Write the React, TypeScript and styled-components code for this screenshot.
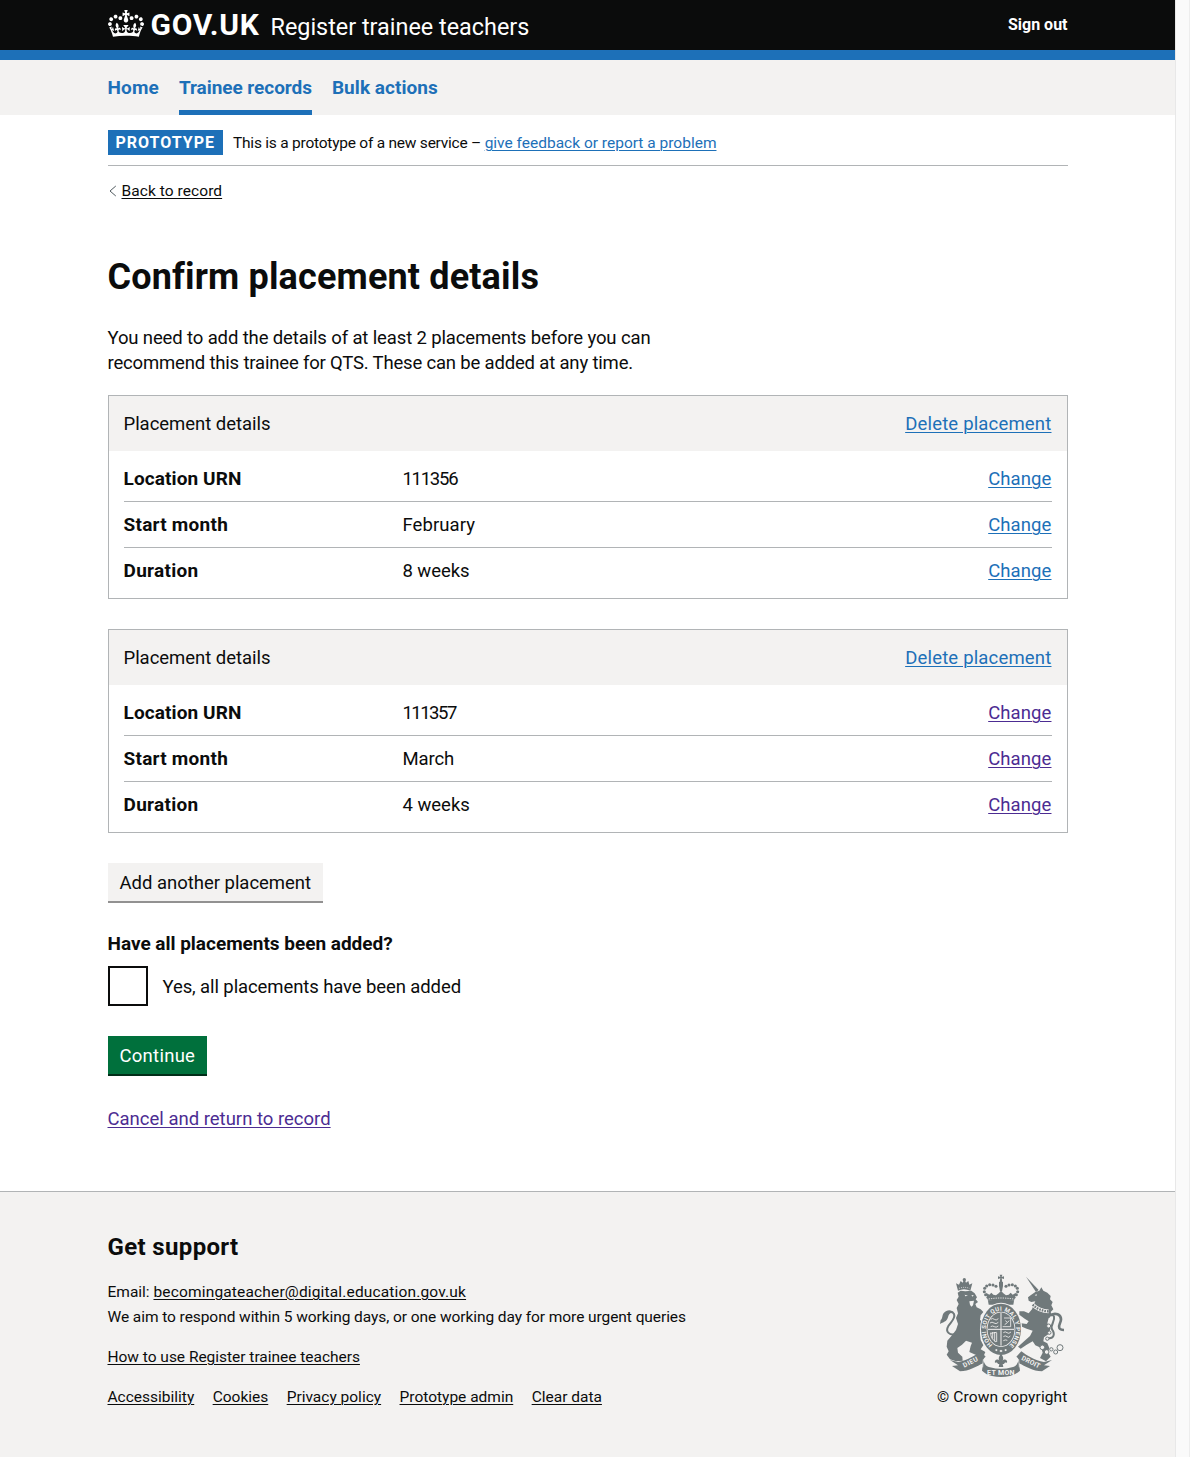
import React from "react";
import styled, { createGlobalStyle, css } from "styled-components";

const ink = "#0b0c0c";
const blue = "#1d70b8";
const visited = "#4c2c92";
const grey = "#f3f2f1";
const line = "#b1b4b6";
const crest = "#70797b";

const GlobalStyle = createGlobalStyle`
  * { box-sizing: border-box; }
  body { margin: 0; background: #fff; color: ${ink}; font: 400 18.5px/25px Roboto, Arial, sans-serif; }
  h1, h2, p, dl, dt, dd, ul { margin: 0; padding: 0; }
  ul { list-style: none; }
`;

type Tracked = { $track?: number };
const track = css<Tracked>`
  letter-spacing: ${(p) => p.$track ?? 0}px;
`;

const Shell = styled.div`
  display: grid;
  grid-template-columns: 1fr 15px;
  height: 1457px;
  overflow: hidden;
`;
const Page = styled.div`
  display: flex;
  flex-direction: column;
  min-width: 0;
`;
const ScrollTrack = styled.div`
  background: #fafafa;
  border-left: 1px solid #e8e8e8;
  border-right: 1px solid #ededed;
`;
const Container = styled.div`
  width: 960px;
  margin: 0 auto;
`;

const Header = styled.header`
  height: 60px;
  background: ${ink};
  border-bottom: 10px solid ${blue};
  color: #fff;
`;
const HeaderRow = styled(Container)`
  display: flex;
  align-items: baseline;
  height: 50px;
`;
const Crown = styled.svg`
  width: 36px;
  height: 27px;
  margin-right: 7px;
  align-self: flex-start;
  margin-top: 10px;
`;
const Logotype = styled.span<Tracked>`
  font-size: 30px;
  line-height: 49px;
  font-weight: 700;
  ${track}
`;
const ServiceName = styled.span<Tracked>`
  margin-left: 11px;
  font-size: 23.4px;
  line-height: 30px;
  ${track}
`;
const SignOut = styled.a<Tracked>`
  align-self: center;
  margin-left: auto;
  font-size: 16px;
  line-height: 20px;
  font-weight: 700;
  ${track}
`;

const Nav = styled.nav`
  height: 55px;
  background: ${grey};
`;
const NavList = styled(Container)`
  display: flex;
  gap: 20px;
`;
const NavItem = styled.a<Tracked & { $current?: boolean }>`
  height: 55px;
  padding-top: 15px;
  color: ${blue};
  font-size: 19px;
  font-weight: 700;
  border-bottom: 5px solid ${(p) => (p.$current ? blue : "transparent")};
  ${track}
`;

const PhaseBanner = styled(Container)`
  display: flex;
  align-items: center;
  height: 51px;
  padding: 15px 0 10px;
  border-bottom: 1px solid ${line};
  font-size: 15.5px;
`;
const PhaseText = styled.p`
  padding-top: 2px;
`;
const Tag = styled.strong<Tracked>`
  height: 25px;
  padding: 0 8px;
  margin-right: 10px;
  background: ${blue};
  color: #fff;
  font-size: 16px;
  font-weight: 700;
  line-height: 25px;
  ${track}
`;
const Span = styled.span<Tracked>`
  ${track}
`;
const Link = styled.a<Tracked & { $tone?: "visited" | "ink" }>`
  color: ${(p) => (p.$tone === "visited" ? visited : p.$tone === "ink" ? ink : blue)};
  text-decoration: underline;
  text-decoration-thickness: 1px;
  text-underline-offset: 2px;
  ${track}
`;
const BackRow = styled.div`
  display: flex;
  align-items: center;
  gap: 5px;
  margin-top: 15px;
  height: 20px;
  font-size: 15.5px;
  line-height: 20px;
`;
const Chevron = styled.svg`
  width: 9px;
  height: 12px;
`;
const Heading = styled.h1<Tracked>`
  margin-top: 56px;
  font-size: 36px;
  line-height: 40px;
  font-weight: 700;
  ${track}
`;
const Lead = styled.p`
  margin: 29px 0 19px;
`;
const Row = styled.span<Tracked>`
  display: block;
  ${track}
`;

const Card = styled.section`
  border: 1px solid ${line};
  & + & {
    margin-top: 30px;
  }
`;
const CardHead = styled.div`
  display: flex;
  justify-content: space-between;
  padding: 16px 15px 14px;
  background: ${grey};
`;
const SummaryList = styled.dl`
  padding: 5px 15px;
`;
const SummaryRow = styled.div`
  display: grid;
  grid-template-columns: 30% 1fr auto;
  padding: 11px 0 9px;
  & + & {
    border-top: 1px solid ${line};
  }
`;
const Key = styled.dt<Tracked>`
  font-size: 19px;
  line-height: 23px;
  font-weight: 700;
  ${track}
`;
const Value = styled.dd<Tracked>`
  padding-left: 0.5px;
  ${track}
`;

const Button = styled.button<Tracked & { $secondary?: boolean }>`
  display: block;
  height: 38px;
  padding: 2px 12px 0;
  border: 0;
  font: inherit;
  color: ${(p) => (p.$secondary ? ink : "#fff")};
  background: ${(p) => (p.$secondary ? grey : "#00703c")};
  box-shadow: 0 2px 0 ${(p) => (p.$secondary ? "#929191" : "#002d18")};
  margin-top: 30px;
  ${track}
`;
const Legend = styled.p<Tracked>`
  margin-top: 30px;
  font-size: 19px;
  font-weight: 700;
  ${track}
`;
const CheckRow = styled.label`
  display: flex;
  align-items: center;
  gap: 15px;
  margin-top: 10px;
`;
const CheckLabel = styled.span<Tracked>`
  padding-top: 2px;
  ${track}
`;
const CheckBox = styled.input`
  appearance: none;
  width: 40px;
  height: 40px;
  margin: 0;
  border: 2px solid ${ink};
  background: #fff;
`;
const CancelRow = styled.p`
  margin-top: 33px;
`;

const Footer = styled.footer`
  flex: 1;
  margin-top: 59px;
  background: ${grey};
  border-top: 1px solid ${line};
`;
const FooterRow = styled(Container)`
  display: flex;
  justify-content: space-between;
  padding-top: 40px;
  font-size: 15.5px;
`;
const FooterHeading = styled.h2<Tracked>`
  font-size: 24px;
  line-height: 30px;
  margin-bottom: 18px;
  ${track}
`;
const FooterLine = styled.p`
  margin-bottom: 15px;
`;
const FooterLinks = styled.ul`
  display: flex;
  gap: 18.4px;
`;
const Copyright = styled.div`
  display: flex;
  flex-direction: column;
  align-items: flex-end;
  padding-top: 42px;
`;
const Arms = styled.svg`
  width: 125px;
  height: 103px;
  margin: 0 2.5px 8px 0;
`;

const CrownIcon = () => (
  <Crown viewBox="0 0 132 97" preserveAspectRatio="none" fill="#fff" aria-hidden="true">
    <path
      fillRule="evenodd"
      d="M25 30.2c3.5 1.5 7.7-.2 9.1-3.7 1.5-3.6-.2-7.8-3.9-9.2-3.6-1.4-7.6.3-9.1 3.9-1.4 3.5.3 7.5 3.9 9zM9 39.5c3.6 1.5 7.8-.2 9.2-3.7 1.5-3.6-.2-7.8-3.9-9.1-3.6-1.5-7.6.2-9.1 3.8-1.4 3.5.3 7.5 3.8 9zM4.4 57.2c3.5 1.5 7.7-.2 9.1-3.8 1.5-3.6-.2-7.7-3.9-9.1-3.5-1.5-7.6.3-9.1 3.8-1.4 3.5.3 7.6 3.9 9.1zm38.3-21.4c3.5 1.5 7.7-.2 9.1-3.8 1.5-3.6-.2-7.7-3.9-9.1-3.6-1.5-7.6.3-9.1 3.8-1.3 3.6.4 7.7 3.9 9.1zm64.4-5.6c-3.6 1.5-7.8-.2-9.1-3.7-1.5-3.6.2-7.8 3.8-9.2 3.6-1.4 7.7.3 9.2 3.9 1.3 3.5-.4 7.5-3.9 9zm15.9 9.3c-3.6 1.5-7.7-.2-9.1-3.7-1.5-3.6.2-7.8 3.7-9.1 3.6-1.5 7.7.2 9.2 3.8 1.5 3.5-.3 7.5-3.8 9zm4.7 17.7c-3.6 1.5-7.8-.2-9.2-3.8-1.5-3.6.2-7.7 3.9-9.1 3.6-1.5 7.7.3 9.2 3.8 1.3 3.5-.4 7.6-3.9 9.1zM89.3 35.8c-3.6 1.5-7.8-.2-9.2-3.8-1.4-3.6.2-7.7 3.9-9.1 3.6-1.5 7.7.3 9.2 3.8 1.4 3.6-.3 7.7-3.9 9.1zM69.7 17.7l8.9 4.7V9.3l-8.9 2.8c-.2-.3-.5-.6-.9-.9L72.4 0H59.6l3.5 11.2c-.3.3-.6.5-.9.9l-8.8-2.8v13.1l8.8-4.7c.3.3.6.7.9.9l-5 15.4v.1c-.2.8-.4 1.6-.4 2.4 0 4.1 3.1 7.5 7 8.1h.2c.3 0 .7.1 1 .1.4 0 .7 0 1-.1h.2c4-.6 7.1-4.1 7.1-8.1 0-.8-.1-1.7-.4-2.4V34l-5.1-15.4c.4-.2.7-.6 1-.9zM66 92.8c16.9 0 32.8 1.1 47.1 3.2 4-16.9 8.9-26.7 14-33.5l-9.6-3.4c1 4.9 1.1 7.2 0 10.2-1.5-1.4-3-4.3-4.2-8.7L108.6 76c2.8-2 5-3.2 7.5-3.3-4.4 9.4-10 11.9-13.6 11.2-4.3-.8-6.3-4.6-5.6-7.9 1-4.7 5.7-5.9 8-.5 4.3-8.7-3-11.4-7.6-8.8 7.1-7.2 7.9-13.5 2.1-21.1-8 6.1-8.1 12.3-4.5 20.8-4.7-5.4-12.1-2.5-9.5 6.2 3.4-5.2 7.9-2 7.2 3.1-.6 4.3-6.4 7.8-13.5 7.2-10.3-.9-10.9-8-11.2-13.8 2.5-.5 7.1 1.8 11 7.3L80.2 60c-4.1 4.4-8 5.3-12.3 5.4 1.4-4.4 8-11.6 8-11.6H55.5s6.4 7.2 7.9 11.6c-4.2-.1-8-1-12.3-5.4l1.4 16.4c3.9-5.5 8.5-7.7 10.9-7.3-.3 5.8-.9 12.8-11.1 13.8-7.2.6-12.9-2.9-13.5-7.2-.7-5 3.8-8.3 7.1-3.1 2.7-8.7-4.6-11.6-9.4-6.2 3.7-8.5 3.6-14.7-4.6-20.8-5.8 7.6-5 13.9 2.2 21.1-4.7-2.6-11.9.1-7.7 8.8 2.3-5.5 7.1-4.2 8.1.5.7 3.3-1.3 7.1-5.7 7.9-3.5.7-9-1.8-13.5-11.2 2.5.1 4.7 1.3 7.5 3.3l-4.7-15.4c-1.2 4.4-2.7 7.2-4.3 8.7-1.1-3-.9-5.3 0-10.2l-9.5 3.4c5 6.9 9.9 16.7 14 33.5 14.8-2.1 30.8-3.2 47.7-3.2z"
    />
  </Crown>
);

const beads: [number, number][] = [
  [174, 98], [167, 90], [163, 81], [164, 71], [170, 64], [179, 60], [189, 61], [198, 65],
  [252, 98], [259, 90], [263, 81], [262, 71], [256, 64], [247, 60], [237, 61], [228, 65],
];
const links: [number, number, number][] = [
  [356, 184, 6], [358, 204, 5], [352, 222, 5], [337, 248, 7], [350, 262, 7],
  [364, 254, 5], [377, 262, 6], [390, 249, 9],
];

const CrestIcon = () => (
  <Arms viewBox="30 28 375 309" fill={crest} aria-hidden="true">
    <path id="motto" fill="none" d="M190 242.5A45 56 0 1 1 236 242.5" />
    {/* lion */}
    <path d="M83 84L92 78L106 80L124 78L134 86L141 98L137 104L144 112L136 118L140 128L152 134L160 142L152 152L150 166L160 172L170 186L164 200L154 192L150 204L152 226L160 242L152 254L166 262L160 276L140 272L118 262L122 244L126 234L108 228L96 240L82 250L84 264L97 276L98 288L78 290L60 284L50 270L56 260L50 246L52 228L66 212L78 196L84 178L78 160L84 146L80 130L86 118L80 106L86 96Z" />
    <path fill={grey} d="M104 90L114 93L106 95ZM124 92L131 91L128 96ZM118 110L132 108L129 122L124 126L120 120Z" />
    <path
      fill="none"
      stroke={crest}
      strokeWidth="6"
      d="M78 208C58 214 46 200 54 186C60 174 78 162 72 148C66 138 50 142 46 154"
    />
    <path d="M32 166C38 162 36 150 42 144C50 134 66 134 72 144C62 142 56 148 54 158C50 172 40 172 30 178Z" />
    <path d="M84 78L78 56L87 60L92 49L98 54L103 42L108 54L115 49L118 60L127 56L121 78C108 72 96 72 84 78Z" />
    <circle cx="103" cy="45" r="5" />
    <path fill="none" stroke={grey} strokeWidth="2" strokeDasharray="3 3" d="M87 71C98 67 108 67 118 71" />
    {/* unicorn */}
    <path d="M288 36L326 76L318 82Z" />
    <path d="M316 82L328 78L334 68L340 78L352 84L362 94L360 104L368 112L364 122L370 134L362 142L366 152L356 160L352 176L362 190L356 208L342 218L340 230L352 236L358 250L354 262L362 276L348 290L330 280L338 264L334 250L316 242L308 230L290 240L272 252L264 246L284 228L300 214L308 198L290 192L276 186L274 176L290 178L296 170L284 162L268 150L268 140L282 140L296 146L306 134L312 118L316 110L304 112L296 108L294 98L304 90Z" />
    <path fill={grey} d="M314 91L321 89L319 94Z" />
    <path
      fill="none"
      stroke={crest}
      strokeWidth="6"
      d="M352 220C372 224 376 208 366 194C360 180 376 170 372 156C368 146 354 150 356 160"
    />
    <path
      fill="none"
      stroke={crest}
      strokeWidth="8"
      d="M362 152C376 142 393 150 393 164C393 176 384 180 388 190C390 194 396 196 402 196"
    />
    <path fill="none" stroke={grey} strokeWidth="11" d="M308 120C320 132 338 140 356 140" />
    <path fill="none" stroke={crest} strokeWidth="7" strokeDasharray="5 3" d="M308 120C320 132 338 140 356 140" />
    <g fill="none" stroke={crest} strokeWidth="3">
      {links.map(([x, y, r]) => (
        <circle key={`${x}-${y}`} cx={x} cy={y} r={r} fill={grey} />
      ))}
    </g>
    {/* crown above the garter */}
    <path d="M209 30H217L215 37L222 35V43L215 41L217 52H209L211 41L204 43V35L211 37Z" />
    <path d="M207 52H219V64L216 80H210L207 64Z" />
    {beads.map(([x, y]) => (
      <circle key={`${x}-${y}`} cx={x} cy={y} r="4.6" />
    ))}
    <path d="M168 84L178 90L184 84L190 90L198 92L206 86L213 78L220 86L228 92L236 90L242 84L248 90L258 84L252 108H174Z" />
    <path fill="none" stroke={grey} strokeWidth="2.5" strokeDasharray="4 3" d="M176 103C200 99 226 99 250 103" />
    <path d="M174 108C200 103 226 103 252 108L250 120H176Z" />
    {/* garter and shield */}
    <ellipse cx="213" cy="194" rx="63" ry="80" fill={grey} />
    <ellipse cx="213" cy="194" rx="60" ry="77" />
    <ellipse cx="213" cy="194" rx="43" ry="53" fill={grey} />
    <ellipse cx="213" cy="194" rx="40.5" ry="50.5" />
    <text fill={grey} fontFamily="Roboto, sans-serif" fontWeight="700" fontSize="18">
      <textPath href="#motto" startOffset="3" textLength="264">
        HONI SOIT QUI MAL Y PENSE
      </textPath>
    </text>
    <path fill="none" stroke={grey} strokeWidth="3" d="M213 145V243M174 194H252" />
    <path
      fill="none"
      stroke={grey}
      strokeWidth="2.5"
      d="M182 164q6 -5 11 0t12 -2M180 175q6 -5 12 0t13 -2M182 186q6 -4 11 0t12 -2M222 160h20v26h-24M226 168l6 5l6 -5M224 180l8 -6M182 204c0 14 6 22 16 28M188 202v20M194 202v28M200 204v28M182 206l18 -3M220 204q6 -5 11 0t12 -2M220 216q6 -5 11 0t10 -2M220 228q6 -4 12 -1"
    />
    <path fill={grey} d="M199 253l4 3l-4 4l-4 -4zM213 255l5 4l-5 4l-5 -4zM227 253l4 3l-4 4l-4 -4z" />
    {/* ribbon */}
    <path d="M60 286L84 292C112 288 136 272 152 260L167 276C160 280 158 288 160 296C140 304 118 320 90 320L66 304L84 302Z" />
    <path d="M366 286L342 292C314 288 290 272 274 260L259 276C266 280 268 288 266 296C286 304 308 320 336 320L360 304L342 302Z" />
    <path d="M160 286C164 300 170 306 180 308C202 314 224 314 246 308C256 306 262 300 266 286L270 318C262 326 250 332 240 334C222 338 204 338 186 334C176 332 164 326 156 318Z" />
    <path fill="none" stroke={grey} strokeWidth="2" d="M160 284L158 308M266 284L268 308" />
    <path d="M213 268C221 277 221 283 217 289C223 280 234 285 231 295C227 292 223 294 222 298H218L220 307H206L208 298H204C203 294 199 292 195 295C192 285 203 280 209 289C205 283 205 277 213 268Z" />
    <g fill={grey} fontFamily="Roboto, sans-serif" fontWeight="700" fontSize="20" textAnchor="middle">
      <text transform="translate(125 298) rotate(-27)" letterSpacing="1.5">DIEU</text>
      <text x="213" y="331" fontSize="21" letterSpacing="1">ET MON</text>
      <text transform="translate(300 298) rotate(27)" letterSpacing="0.5">DROIT</text>
    </g>
  </Arms>
);

type SummaryItem = { name: string; value: string; nameTrack: number; valueTrack: number };
type Placement = { id: number; seen: boolean; rows: SummaryItem[] };
const placements: Placement[] = [
  {
    id: 1,
    seen: false,
    rows: [
      { name: "Location URN", value: "111356", nameTrack: 0.1, valueTrack: -1.25 },
      { name: "Start month", value: "February", nameTrack: 0.25, valueTrack: 0.1 },
      { name: "Duration", value: "8 weeks", nameTrack: 0.3, valueTrack: -0.05 },
    ],
  },
  {
    id: 2,
    seen: true,
    rows: [
      { name: "Location URN", value: "111357", nameTrack: 0.1, valueTrack: -1.5 },
      { name: "Start month", value: "March", nameTrack: 0.25, valueTrack: -0.1 },
      { name: "Duration", value: "4 weeks", nameTrack: 0.3, valueTrack: 0 },
    ],
  },
];
const footerLinks = ["Accessibility", "Cookies", "Privacy policy", "Prototype admin", "Clear data"];

export default function App() {
  return (
    <>
      <GlobalStyle />
      <Shell>
        <Page>
          <Header>
            <HeaderRow>
              <CrownIcon />
              <Logotype $track={0.7}>GOV.UK</Logotype>
              <ServiceName>Register trainee teachers</ServiceName>
              <SignOut>Sign out</SignOut>
            </HeaderRow>
          </Header>
          <Nav>
            <NavList>
              <NavItem $track={0.13}>Home</NavItem>
              <NavItem $current $track={-0.05}>Trainee records</NavItem>
              <NavItem $track={0.05}>Bulk actions</NavItem>
            </NavList>
          </Nav>
          <PhaseBanner>
            <Tag $track={1}>PROTOTYPE</Tag>
            <PhaseText>
              <Span $track={-0.23}>This is a prototype of a new service –&nbsp;</Span>
              <Link>give feedback or report a problem</Link>
            </PhaseText>
          </PhaseBanner>
          <Container as="main">
            <BackRow>
              <Chevron viewBox="0 0 9 12" fill="none" stroke="#505a5f" aria-hidden="true">
                <path d="M7.8 1L2 6l5.8 5" />
              </Chevron>
              <Link $tone="ink" $track={0.07}>Back to record</Link>
            </BackRow>
            <Heading $track={0.155}>Confirm placement details</Heading>
            <Lead>
              <Row $track={-0.13}>You need to add the details of at least 2 placements before you can</Row>
              <Row $track={-0.175}>recommend this trainee for QTS. These can be added at any time.</Row>
            </Lead>
            {placements.map((p) => (
              <Card key={p.id}>
                <CardHead>
                  <Span $track={-0.03}>Placement details</Span>
                  <Link $track={0.18}>Delete placement</Link>
                </CardHead>
                <SummaryList>
                  {p.rows.map((row) => (
                    <SummaryRow key={row.name}>
                      <Key $track={row.nameTrack}>{row.name}</Key>
                      <Value $track={row.valueTrack}>{row.value}</Value>
                      <dd>
                        <Link $tone={p.seen ? "visited" : undefined} $track={0.1}>Change</Link>
                      </dd>
                    </SummaryRow>
                  ))}
                </SummaryList>
              </Card>
            ))}
            <Button $secondary $track={-0.02}>Add another placement</Button>
            <Legend $track={-0.02}>Have all placements been added?</Legend>
            <CheckRow>
              <CheckBox type="checkbox" />
              <CheckLabel $track={-0.1}>Yes, all placements have been added</CheckLabel>
            </CheckRow>
            <Button $track={0.26}>Continue</Button>
            <CancelRow>
              <Link $tone="visited">Cancel and return to record</Link>
            </CancelRow>
          </Container>
          <Footer>
            <FooterRow>
              <div>
                <FooterHeading $track={0.35}>Get support</FooterHeading>
                <FooterLine>
                  <Row>
                    Email: <Link $tone="ink" $track={0.16}>becomingateacher@digital.education.gov.uk</Link>
                  </Row>
                  <Row $track={-0.07}>
                    We aim to respond within 5 working days, or one working day for more urgent queries
                  </Row>
                </FooterLine>
                <FooterLine>
                  <Link $tone="ink" $track={-0.02}>How to use Register trainee teachers</Link>
                </FooterLine>
                <FooterLinks>
                  {footerLinks.map((label) => (
                    <li key={label}>
                      <Link $tone="ink">{label}</Link>
                    </li>
                  ))}
                </FooterLinks>
              </div>
              <Copyright>
                <CrestIcon />
                <Span $track={0.13}>© Crown copyright</Span>
              </Copyright>
            </FooterRow>
          </Footer>
        </Page>
        <ScrollTrack />
      </Shell>
    </>
  );
}
